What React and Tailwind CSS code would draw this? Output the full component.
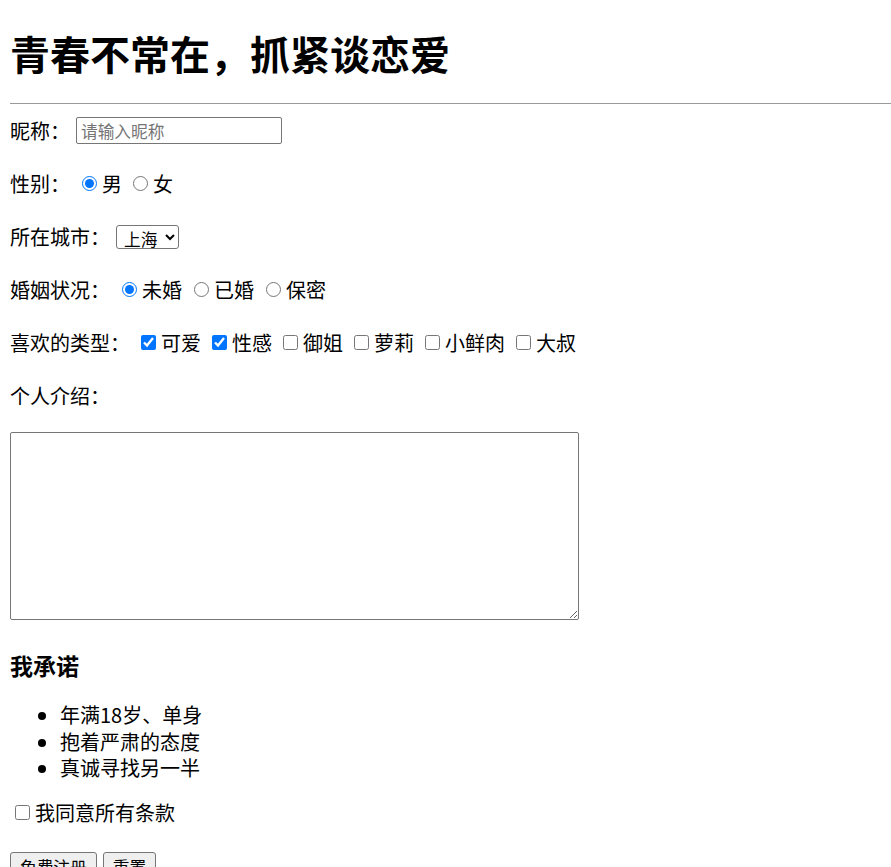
import React from 'react';

const Choice = ({ type, name, label, checked }) => (
  <label className="flex items-center ml-[12px]">
    <input
      type={type}
      name={name}
      defaultChecked={checked}
      className="m-0 w-[15px] h-[15px]"
    />
    <span className="ml-[5px]">{label}</span>
  </label>
);

const Check = ({ label, checked }) => (
  <label className="flex items-center ml-[11px]">
    <input type="checkbox" defaultChecked={checked} className="m-0 w-[15px] h-[15px]" />
    <span className="ml-[5px]">{label}</span>
  </label>
);

const App = () => {
  return (
    <div
      className="min-h-screen bg-white text-black text-[20px] pl-[10px] overflow-hidden"
      style={{ fontFamily: '"Noto Sans CJK SC", "Liberation Sans", sans-serif' }}
    >
      {/* Title */}
      <h1 className="mt-[27px] h-[53px] leading-[53px] text-[40px] font-bold">
        青春不常在，抓紧谈恋爱
      </h1>
      <div className="mt-[23px] border-t border-[#9a9a9a]"></div>

      {/* Form rows */}
      <div className="flex items-center h-[53px]">
        <span>昵称：</span>
        <input
          type="text"
          placeholder="请输入昵称"
          className="ml-[6px] w-[206px] h-[27px] px-[4px] text-[16.7px] border border-[#767676] rounded-[2px] placeholder:text-[#757575] outline-none"
        />
      </div>

      <div className="flex items-center h-[53px]">
        <span>性别：</span>
        <Choice type="radio" name="sex" label="男" checked />
        <label className="flex items-center ml-[11px]">
          <input type="radio" name="sex" className="m-0 w-[15px] h-[15px]" />
          <span className="ml-[5px]">女</span>
        </label>
      </div>

      <div className="flex items-center h-[53px]">
        <span>所在城市：</span>
        <select
          defaultValue="上海"
          className="ml-[6px] w-[63px] h-[24px] text-[16.7px] leading-[20px] border border-[#767676] rounded-[3px] pl-[3px]"
        >
          <option>北京</option>
          <option>上海</option>
          <option>广州</option>
        </select>
      </div>

      <div className="flex items-center h-[53px]">
        <span>婚姻状况：</span>
        <Choice type="radio" name="marry" label="未婚" checked />
        <Choice type="radio" name="marry" label="已婚" />
        <Choice type="radio" name="marry" label="保密" />
      </div>

      <div className="flex items-center h-[53px]">
        <span>喜欢的类型：</span>
        <Check label="可爱" checked />
        <Check label="性感" checked />
        <Check label="御姐" />
        <Check label="萝莉" />
        <Check label="小鲜肉" />
        <Check label="大叔" />
      </div>

      <div className="flex items-center h-[53px]">
        <span>个人介绍：</span>
      </div>

      <textarea className="block mt-[10px] w-[569px] h-[188px] border border-[#767676] rounded-[2px]"></textarea>

      {/* Promise */}
      <h3 className="mt-[30px] h-[30px] leading-[30px] text-[23px] font-bold">我承诺</h3>
      <ul className="mt-[22px] list-disc pl-[50px] leading-[26.5px]">
        <li>年满18岁、单身</li>
        <li>抱着严肃的态度</li>
        <li>真诚寻找另一半</li>
      </ul>

      <label className="flex items-center h-[26px] mt-[18px]">
        <input type="checkbox" className="m-0 ml-[5px] w-[15px] h-[15px]" />
        <span className="ml-[5px]">我同意所有条款</span>
      </label>

      <div className="flex mt-[26px] gap-[6px]">
        <button className="h-[32px] px-[9px] text-[16.7px] bg-[#efefef] border border-[#767676] rounded-[3px]">
          免费注册
        </button>
        <button className="h-[32px] px-[9px] text-[16.7px] bg-[#efefef] border border-[#767676] rounded-[3px]">
          重置
        </button>
      </div>
    </div>
  );
};

export default App;
